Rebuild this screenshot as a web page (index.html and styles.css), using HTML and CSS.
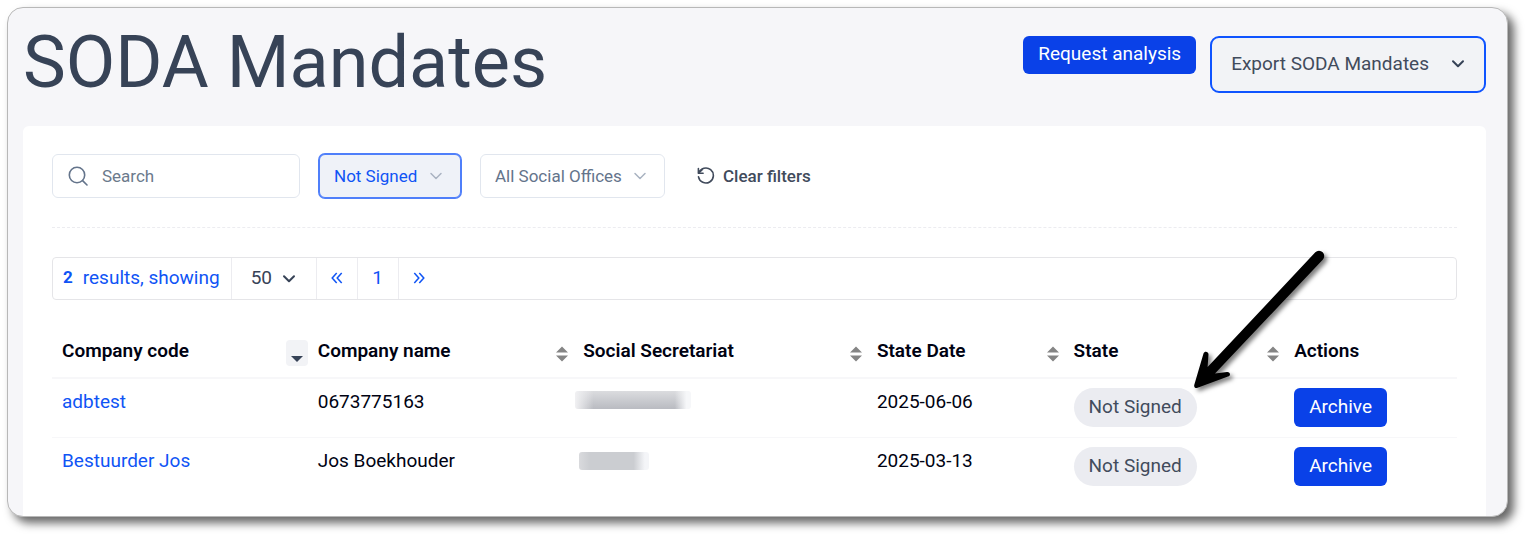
FILE: index.html
```html
<!DOCTYPE html>
<html lang="en">
<head>
<meta charset="utf-8">
<title>SODA Mandates</title>
<link rel="stylesheet" href="styles.css">
</head>
<body>
<main class="frame">
  <header class="page-header">
    <h1 class="page-title">SODA Mandates</h1>
    <div class="header-actions">
      <button class="btn btn-primary btn-request" type="button">Request analysis</button>
      <button class="btn-export" type="button">Export SODA Mandates
        <svg class="chevron" viewBox="0 0 14 10" aria-hidden="true"><path d="M2 2.3 7 7.3 12 2.3"/></svg>
      </button>
    </div>
  </header>

  <section class="card">
    <form class="filters">
      <label class="search">
        <svg class="search-icon" viewBox="0 0 20 20" aria-hidden="true"><circle cx="9" cy="9" r="7.7"/><path d="M14.6 14.6 19 19"/></svg>
        <input type="text" placeholder="Search" aria-label="Search">
      </label>
      <label class="picker picker-state">
        <select aria-label="State"><option>Not Signed</option></select>
        <svg class="chevron chevron-light" viewBox="0 0 14 10" aria-hidden="true"><path d="M2 2.500 7 7.500 12 2.500"/></svg>
      </label>
      <label class="picker picker-office">
        <select aria-label="Social office"><option>All Social Offices</option></select>
        <svg class="chevron chevron-light" viewBox="0 0 14 10" aria-hidden="true"><path d="M2 2.500 7 7.500 12 2.500"/></svg>
      </label>
      <button class="btn-clear" type="reset">
        <svg class="reset-icon" viewBox="0 0 18 18" aria-hidden="true"><path d="M1.400 1.500V6.200H6.100M1.800 6A7.500 7.500 0 1 1 1.500 9.900"/><path d="M1.600 6 5 2.800"/></svg>
        Clear filters
      </button>
    </form>

    <nav class="pager" aria-label="Pagination">
      <div class="pager-total"><b>2</b><span>results, showing</span></div>
      <label class="picker picker-size">
        <select aria-label="Results per page"><option>50</option></select>
        <svg class="chevron" viewBox="0 0 14 10" aria-hidden="true"><path d="M2 2.300 7 7.300 12 2.300"/></svg>
      </label>
      <a class="pager-link" href="#" aria-label="First page"><svg class="double" viewBox="0 0 12 12" aria-hidden="true"><path d="M5.700 1 1.200 6 5.700 11M10.700 1 6.200 6 10.700 11"/></svg></a>
      <a class="pager-link" href="#">1</a>
      <a class="pager-link pager-last" href="#" aria-label="Last page"><svg class="double" viewBox="0 0 12 12" aria-hidden="true"><path d="M1.300 1 5.800 6 1.300 11M6.300 1 10.800 6 6.300 11"/></svg></a>
    </nav>

    <table class="mandates">
      <colgroup><col class="col-code"><col class="col-name"><col class="col-office"><col class="col-date"><col class="col-state"><col></colgroup>
      <thead>
        <tr>
          <th><div class="head">Company code <button class="sort sort-active" type="button" aria-label="Sort by company code"><svg viewBox="0 0 12 16" aria-hidden="true"><path d="M0 9H12L6 15Z"/></svg></button></div></th>
          <th><div class="head">Company name <button class="sort" type="button" aria-label="Sort by company name"><svg viewBox="0 0 12 16" aria-hidden="true"><path d="M0 6.500H12L6 .500ZM0 9.500H12L6 15.500Z"/></svg></button></div></th>
          <th><div class="head">Social Secretariat <button class="sort" type="button" aria-label="Sort by social secretariat"><svg viewBox="0 0 12 16" aria-hidden="true"><path d="M0 6.500H12L6 .500ZM0 9.500H12L6 15.500Z"/></svg></button></div></th>
          <th><div class="head">State Date <button class="sort" type="button" aria-label="Sort by state date"><svg viewBox="0 0 12 16" aria-hidden="true"><path d="M0 6.500H12L6 .500ZM0 9.500H12L6 15.500Z"/></svg></button></div></th>
          <th><div class="head">State <button class="sort" type="button" aria-label="Sort by state"><svg viewBox="0 0 12 16" aria-hidden="true"><path d="M0 6.500H12L6 .500ZM0 9.500H12L6 15.500Z"/></svg></button></div></th>
          <th><div class="head">Actions</div></th>
        </tr>
      </thead>
      <tbody>
        <tr>
          <td><a href="#">adbtest</a></td>
          <td>0673775163</td>
          <td><div class="redacted redacted-long"></div></td>
          <td>2025-06-06</td>
          <td class="state-cell"><span class="badge">Not Signed</span>
            <svg class="pointer" viewBox="0 0 140 150" aria-hidden="true"><path d="M127.300 2.300A5.200 5.200 0 0 1 134.700 9.700L27 123.500 39 121.900C42.500 121.700 43 125.500 40 126.600L9.500 137.800C7.300 138.500 5.700 137 6.300 134.700L15.500 103.500C16.500 100.500 20.700 101.500 20.500 104.500L19.600 117Z"/></svg>
          </td>
          <td><button class="btn btn-primary" type="button">Archive</button></td>
        </tr>
        <tr>
          <td><a href="#">Bestuurder Jos</a></td>
          <td>Jos Boekhouder</td>
          <td><div class="redacted redacted-short"></div></td>
          <td>2025-03-13</td>
          <td><span class="badge">Not Signed</span></td>
          <td><button class="btn btn-primary" type="button">Archive</button></td>
        </tr>
      </tbody>
    </table>
  </section>
</main>
</body>
</html>
```
FILE: styles.css
```css
* { box-sizing: border-box; }
body {
  margin: 0;
  padding: 7px 23px 23px 7px;
  background: #fff;
  color: #000212;
  font: 19px/27px Roboto, sans-serif;
}
button, input, select { font: inherit; color: inherit; margin: 0; }
button { cursor: pointer; }
a { color: #0f54f5; text-decoration: none; }
svg { display: block; flex: none; fill: none; }

.frame {
  border: 1px solid #b8b8b8;
  border-radius: 16px;
  background: #f6f6f9;
  padding: 19px 21px 0 15px;
  overflow: hidden;
  box-shadow: 6px 6px 10px rgba(0, 0, 0, .6);
}
.page-header {
  display: flex;
  justify-content: space-between;
  align-items: flex-start;
  padding-bottom: 27px;
}
.page-title { margin: 0; color: #374357; font-size: 72px; line-height: 72px; font-weight: 400; }
.header-actions { display: flex; align-items: flex-start; gap: 14px; padding-top: 9px; }
.btn { border: 0; border-radius: 6px; height: 39px; padding: 0 15px 2px; }
.btn-primary { background: #0a41e8; color: #fff; }
.btn-request { height: 38px; padding-bottom: 3px; }
.btn-export {
  display: flex;
  align-items: center;
  gap: 20px;
  height: 57px;
  padding: 0 19px 2px;
  border: 2px solid #0f54ff;
  border-radius: 9px;
  background: #f2f3f6;
  color: #414b5c;
}
.btn-export .chevron { margin-left: 2px; }
.chevron { width: 14px; height: 10px; stroke: #374357; stroke-width: 2; stroke-linecap: round; stroke-linejoin: round; }
.chevron-light { stroke: #a9b3c1; stroke-width: 1.500; }

.card { background: #fff; border-radius: 6px 6px 0 0; padding: 28px 29px 19px; }
.filters {
  display: flex;
  align-items: center;
  gap: 19px;
  padding-bottom: 29px;
  border-bottom: 1px dashed #ececf0;
  font-size: 17px;
}
.search {
  display: flex;
  align-items: center;
  gap: 14px;
  width: 248px;
  height: 44px;
  padding: 0 15px;
  border: 1px solid #e1e6ee;
  border-radius: 6px;
}
.search-icon { width: 20px; height: 20px; stroke: #64748b; stroke-width: 1.600; stroke-linecap: round; }
.search input { flex: 1; min-width: 0; padding: 0; border: 0; outline: 0; background: none; }
.search input::placeholder { color: #6b7a8c; opacity: 1; }

.picker { display: grid; align-items: center; }
.picker select {
  grid-area: 1 / 1;
  width: 100%;
  height: 44px;
  padding: 0 14px;
  border: 1px solid #e1e6ee;
  border-radius: 6px;
  appearance: none;
  background: #fff;
  color: #64748b;
}
.picker svg { grid-area: 1 / 1; justify-self: end; margin-right: 18px; pointer-events: none; }
.picker-state { width: 142px; }
.picker-state select { border-color: #4f7ffa; box-shadow: 0 0 0 1px #4f7ffa; background: #eff2f8; color: #0f54f5; }
.picker-office { width: 185px; }
.btn-clear {
  display: flex;
  align-items: center;
  gap: 8px;
  margin-left: 13px;
  padding: 0;
  border: 0;
  background: none;
  color: #414b5c;
  font-weight: 500;
}
.reset-icon { width: 18px; height: 18px; stroke: #414b5c; stroke-width: 1.600; stroke-linecap: round; stroke-linejoin: round; }

.pager {
  display: flex;
  align-items: stretch;
  height: 43px;
  margin-top: 29px;
  border: 1px solid #e5e5e8;
  border-radius: 4px;
}
.pager-total { display: flex; align-items: center; gap: 10px; padding: 0 11px 2px 10px; color: #0f54f5; }
.pager-total b { font-size: 17px; }
.pager .picker { width: 86px; border: solid #ececf0; border-width: 0 1px; }
.picker-size select { height: 41px; padding: 0 19px 2px; border: 0; color: #374357; background: none; }
.picker-size svg { margin-right: 20px; }
.pager-link { display: flex; align-items: center; justify-content: center; width: 41px; padding-bottom: 2px; border-right: 1px solid #ececf0; }
.pager-last { border: 0; }
.double { width: 12px; height: 12px; stroke: #0f54f5; stroke-width: 1.500; }

.mandates { width: 100%; margin-top: 28px; border-collapse: separate; border-spacing: 0; table-layout: fixed; }
.col-code { width: 18.200%; }
.col-name { width: 18.900%; }
.col-office { width: 20.900%; }
.col-date { width: 14%; }
.col-state { width: 15.700%; }
.mandates th { height: 51px; padding: 0 0 1px 10px; text-align: left; font-weight: 600; border-bottom: 2px solid #f7f7f9; }
.head { display: flex; justify-content: space-between; align-items: flex-start; height: 30px; }
.sort { display: grid; place-items: center; width: 22px; height: 30px; padding: 4px 0 0; border: 0; border-radius: 4px; background: none; }
.sort svg { width: 12px; height: 16px; fill: #858585; }
.sort-active { height: 26px; margin-top: 3px; background: #f2f3f6; }
.sort-active svg { fill: #374357; }
.mandates td { height: 59px; padding: 9px 0 0 10px; vertical-align: top; border-bottom: 1px solid #f7f7f9; }
.mandates tr:last-child td { border-bottom: 0; }
.mandates td .btn { display: block; }
.badge { display: inline-block; height: 39px; padding: 0 15px; border-radius: 20px; background: #ebecf1; color: #414b5c; line-height: 38px; }
.state-cell { position: relative; }
.pointer { position: absolute; left: 124px; top: -129px; width: 140px; height: 150px; fill: #000; filter: drop-shadow(3px 3px 2px rgba(0, 0, 0, .5)); }

.redacted { height: 18px; border-radius: 3px; }
.redacted-long {
  width: 116px;
  margin: 3px 0 0 -8px;
  background:
    linear-gradient(90deg, #f1f1f3, rgba(241, 241, 243, 0) 16%, rgba(241, 241, 243, 0) 86%, #f6f7f9 96%),
    linear-gradient(#dbdcdf, #b9bbc1);
}
.redacted-short {
  width: 70px;
  margin: 5px 0 0 -4px;
  background: linear-gradient(90deg, #d9dadd, #cbcdd1 16%, #cbcdd1 78%, #f4f5f8 94%);
}
```
